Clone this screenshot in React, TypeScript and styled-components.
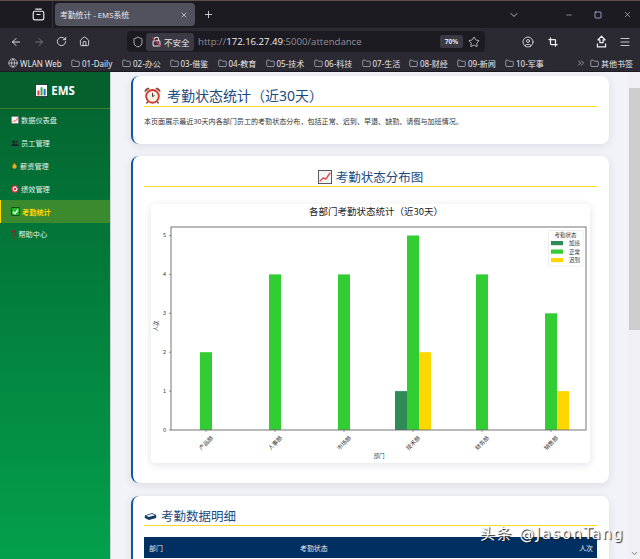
import styled, { createGlobalStyle } from "styled-components";
import {
  ArrowLeft, ArrowRight, RotateCw, Home, Shield, Star, CircleUser, Crop, Menu,
  Folder, Globe, ChevronDown, ChevronsRight, Minus, Square, X, Plus,
} from "lucide-react";

const Global = createGlobalStyle`
  html, body { margin: 0; padding: 0; height: 100%; overflow: hidden; }
  body { font-family: "Noto Sans", "Noto Sans CJK SC", sans-serif; background: #f2f3f8; }
  * { box-sizing: border-box; }
`;

const Screen = styled.div`
  position: relative;
  width: 640px;
  height: 559px;
  display: flex;
  flex-direction: column;
  overflow: hidden;
`;

/* browser chrome */
const TabStrip = styled.div`
  height: 28px;
  flex: none;
  display: flex;
  align-items: center;
  background: #1c1b22;
  border-top: 1px solid #5a5048;
  color: #e6e6ea;
`;

const TabsButton = styled.div`
  width: 53px;
  height: 100%;
  display: flex;
  align-items: center;
  justify-content: flex-end;
  padding-right: 7px;
  border-right: 1px solid #33323a;
`;

const Tab = styled.div`
  width: 140px;
  height: 23px;
  margin-left: 2px;
  padding: 0 7px 0 5px;
  display: flex;
  align-items: center;
  justify-content: space-between;
  background: #52525e;
  border-radius: 4px;
  font-size: 7.8px;
  color: #e8e8ec;
`;

const NewTab = styled.div`
  margin-left: 8px;
  display: flex;
`;

const WindowControls = styled.div`
  margin-left: auto;
  display: flex;
  align-items: center;
  padding-right: 8px;
`;

const WindowButton = styled.div<{ $mr: number }>`
  display: flex;
  margin-right: ${(p) => p.$mr}px;
`;

const Toolbar = styled.div`
  height: 27px;
  flex: none;
  display: flex;
  align-items: center;
  padding-left: 4px;
  background: #2b2a33;
  color: #e6e6ea;
`;

const ToolButton = styled.div<{ $dim?: boolean }>`
  width: 23px;
  height: 23px;
  display: flex;
  align-items: center;
  justify-content: center;
  color: ${(p) => (p.$dim ? "#7b7a82" : "#eeeef0")};
`;

const AddressBar = styled.div`
  width: 358px;
  height: 21px;
  margin-left: 31px;
  padding-left: 3px;
  display: flex;
  align-items: center;
  background: #1c1b22;
  border-radius: 4px;
`;

const ShieldSlot = styled.div`
  width: 16px;
  display: flex;
  justify-content: center;
  color: #dcdce0;
`;

const InsecurePill = styled.div`
  width: 48px;
  height: 18px;
  display: flex;
  align-items: center;
  gap: 2px;
  padding-left: 5px;
  background: #3a3944;
  border-radius: 3px;
  font-size: 8.5px;
  color: #e6e6ea;
`;

const Url = styled.div`
  margin-left: 4px;
  font-family: "Open Sans", sans-serif;
  font-size: 9.6px;
  color: #8f8f96;
  white-space: nowrap;
`;

const UrlHost = styled.span`
  color: #eeeef0;
`;

const Zoom = styled.div`
  margin-left: auto;
  width: 23px;
  height: 13px;
  display: flex;
  align-items: center;
  justify-content: center;
  background: #3a3944;
  border-radius: 2px;
  font-size: 6.5px;
  font-weight: 700;
  color: #e6e6ea;
`;

const AddressStar = styled.div`
  width: 22px;
  display: flex;
  justify-content: center;
  color: #e6e6ea;
`;

const ToolbarRight = styled.div`
  margin-left: 31px;
  display: flex;
  align-items: center;
`;

const Spacer = styled.div<{ $w: number }>`
  width: ${(p) => p.$w}px;
`;

const Bookmarks = styled.div`
  height: 17px;
  flex: none;
  display: flex;
  align-items: center;
  padding-left: 8px;
  background: #2b2a33;
  border-bottom: 1px solid #1c1b22;
  color: #e6e6ea;
`;

const Bookmark = styled.div<{ $w: number }>`
  width: ${(p) => p.$w}px;
  flex: none;
  display: flex;
  align-items: center;
  gap: 2px;
  font-size: 8px;
  white-space: nowrap;
`;

const OverflowMark = styled.div`
  margin-left: 19px;
  width: 17px;
  display: flex;
  color: #d8d8dc;
`;

/* page */
const Page = styled.div`
  flex: 1;
  min-height: 0;
  display: flex;
  background: #f2f3f8;
`;

const Sidebar = styled.nav`
  width: 111px;
  flex: none;
  background: linear-gradient(180deg, #04622f 0%, #027a3a 40%, #04a04c 100%);
  border-right: 1px solid #c9d6cd;
`;

const Brand = styled.div`
  height: 37px;
  display: flex;
  align-items: center;
  justify-content: center;
  gap: 3px;
  background: #05602e;
  border-bottom: 1px solid #3f7d2a;
  font-size: 11.5px;
  font-weight: 700;
  color: #fff;
`;

const NavItem = styled.div<{ $active?: boolean }>`
  height: 22.8px;
  display: flex;
  align-items: center;
  gap: 2px;
  padding-left: 10px;
  font-size: 7.2px;
  color: ${(p) => (p.$active ? "#ffd700" : "#e4f2e8")};
  font-weight: ${(p) => (p.$active ? 700 : 400)};
  background: ${(p) => (p.$active ? "#3b8a2e" : "transparent")};
  border-left: 1px solid ${(p) => (p.$active ? "#ffd700" : "transparent")};
`;

const Main = styled.main`
  flex: 1;
  min-width: 0;
  padding: 4px 19px 0 20px;
  display: flex;
  flex-direction: column;
  gap: 12px;
`;

const Card = styled.section<{ $h: number; $pt: number }>`
  height: ${(p) => p.$h}px;
  flex: none;
  padding: ${(p) => p.$pt}px 12px 0 11px;
  background: #fff;
  border-left: 2px solid #0f56a3;
  border-radius: 8px;
  box-shadow: 0 2px 8px rgba(20, 30, 60, 0.1);
`;

const DetailCard = styled(Card)`
  margin-top: 1px;
`;

const Title = styled.h2<{ $center?: boolean; $size: number; $h: number; $gap: number }>`
  margin: 0;
  height: ${(p) => p.$h}px;
  display: flex;
  align-items: center;
  justify-content: ${(p) => (p.$center ? "center" : "flex-start")};
  gap: ${(p) => p.$gap}px;
  font-size: ${(p) => p.$size}px;
  font-weight: 400;
  color: #1a4a80;
  border-bottom: 1px solid #ffd92e;
`;

const Intro = styled.p`
  margin: 9px 0 0;
  font-size: 7.07px;
  line-height: 10px;
  color: #333;
`;

const ChartCard = styled.div`
  margin: 17px 7px 0 7px;
  height: 259px;
  background: #fff;
  border-radius: 4px;
  box-shadow: 0 2px 8px rgba(20, 30, 60, 0.12);
`;

const ChartSvg = styled.svg`
  display: block;
  font-family: "Noto Sans CJK SC", sans-serif;
`;

const Table = styled.table`
  width: 453px;
  margin-top: 11px;
  border-collapse: collapse;
  table-layout: fixed;
`;

const HeadCell = styled.th<{ $right?: boolean }>`
  height: 21px;
  padding: 0 4px 0 5px;
  background: #002f62;
  font-size: 6.9px;
  font-weight: 400;
  color: #e6edf5;
  text-align: ${(p) => (p.$right ? "right" : "left")};
`;

const Watermark = styled.div`
  position: absolute;
  left: 480px;
  top: 524px;
  font-family: "DejaVu Sans", "Noto Sans CJK SC", sans-serif;
  font-size: 15px;
  line-height: 20px;
  color: #fff;
  white-space: nowrap;
  letter-spacing: 1.5px;
  text-shadow: 1px 1px 1px #222;
`;

const Track = styled.div`
  width: 12px;
  flex: none;
  padding-top: 16px;
  display: flex;
  flex-direction: column;
  background: #f0f0f4;
  position: relative;
`;

const Thumb = styled.div`
  height: 242px;
  margin-left: 1px;
  background: #cdcdcd;
`;

const ScrollDown = styled.div`
  position: absolute;
  right: 1px;
  bottom: 1px;
  display: flex;
  color: #555;
`;

/* icons drawn to match the emoji in the page */
const BarsIcon = ({ s }: { s: number }) => (
  <svg width={s} height={s} viewBox="0 0 16 16">
    <rect x="0.5" y="0.5" width="15" height="15" fill="#fff" stroke="#223" />
    <rect x="3" y="8" width="2.5" height="6" fill="#e23a3a" />
    <rect x="6.8" y="4" width="2.5" height="10" fill="#2fae4a" />
    <rect x="10.6" y="6" width="2.5" height="8" fill="#2a70d8" />
  </svg>
);

const TrendIcon = ({ s }: { s: number }) => (
  <svg width={s} height={s} viewBox="0 0 16 16">
    <rect x="0.5" y="0.5" width="15" height="15" fill="#f4f4f4" stroke="#444" />
    <path d="M2 13 L6 9 L9 10.5 L14 3" fill="none" stroke="#e04848" strokeWidth="1.6" />
  </svg>
);

const PeopleIcon = ({ s }: { s: number }) => (
  <svg width={s} height={s} viewBox="0 0 16 16">
    <circle cx="5" cy="6" r="2.8" fill="#1f242c" />
    <circle cx="11" cy="6" r="2.8" fill="#2a2f38" />
    <path d="M0 14 C1 8 15 8 16 14 Z" fill="#1f242c" />
  </svg>
);

const MoneyIcon = ({ s }: { s: number }) => (
  <svg width={s} height={s} viewBox="0 0 16 16">
    <path d="M5 1 H11 L9.5 4.5 H6.5 Z" fill="#8a5a10" />
    <path d="M8 4 C14 6 15 15.5 8 15.5 C1 15.5 2 6 8 4 Z" fill="#f0a818" />
  </svg>
);

const TargetIcon = ({ s }: { s: number }) => (
  <svg width={s} height={s} viewBox="0 0 16 16">
    <circle cx="8" cy="8" r="7.4" fill="#e0303a" />
    <circle cx="8" cy="8" r="4.8" fill="#fff" />
    <circle cx="8" cy="8" r="2.4" fill="#e0303a" />
    <path d="M8 8 L14 2" stroke="#3a70d0" strokeWidth="1.6" />
  </svg>
);

const CheckIcon = ({ s }: { s: number }) => (
  <svg width={s} height={s} viewBox="0 0 16 16">
    <rect x="0.75" y="0.75" width="14.5" height="14.5" rx="1.5" fill="#22b82e" stroke="#0c3a12" strokeWidth="1.5" />
    <path d="M3.5 8.5 L7 12 L12.5 4.5" fill="none" stroke="#fff" strokeWidth="2.4" />
  </svg>
);

const QuestionIcon = ({ s }: { s: number }) => (
  <svg width={s * 0.6} height={s} viewBox="0 0 10 16">
    <path d="M1.5 5 C1.5 0 9 0 9 4.6 C9 7.5 5.6 7.6 5.6 10.5" fill="none" stroke="#b31414" strokeWidth="2.6" />
    <circle cx="5.5" cy="14" r="1.7" fill="#b31414" />
  </svg>
);

const AlarmIcon = ({ s }: { s: number }) => (
  <svg width={s} height={s} viewBox="0 0 16 16">
    <path d="M0.8 4.5 C1 1.5 3.5 0.5 5 1.5 Z M15.2 4.5 C15 1.5 12.5 0.5 11 1.5 Z" fill="#c9342a" stroke="#40201c" strokeWidth="0.5" />
    <circle cx="8" cy="8.8" r="6" fill="#f7efe2" stroke="#d0392c" strokeWidth="1.7" />
    <path d="M8 5.5 V9 L10 8" fill="none" stroke="#333" strokeWidth="0.9" />
    <path d="M3.5 14 L2.3 15.5 M12.5 14 L13.7 15.5" stroke="#40201c" strokeWidth="1.2" />
  </svg>
);

const BooksIcon = ({ s }: { s: number }) => (
  <svg width={s} height={s} viewBox="0 0 16 16">
    <path d="M1 8 L10 5 L15 7.5 L15 11 L6 13.5 L1 11 Z" fill="#123a66" />
    <path d="M2.5 8.2 L10 5.9 L13.6 7.6 L6 9.9 Z" fill="#e4edf5" />
  </svg>
);

const TabsGlyph = () => (
  <svg width="13" height="13" viewBox="0 0 16 16" fill="none" stroke="currentColor" strokeWidth="1.5">
    <rect x="1.5" y="4" width="13" height="10.5" rx="2" />
    <path d="M4 1.5 H12 M5.5 8 H10.5" />
  </svg>
);

const LockOffGlyph = () => (
  <svg width="11" height="11" viewBox="0 0 16 16" fill="none" strokeWidth="1.5">
    <rect x="3" y="7" width="10" height="7.5" rx="1.5" stroke="#e6e6ea" />
    <path d="M5 7 V4.5 C5 1 11 1 11 4.5 V7" stroke="#e6e6ea" />
    <path d="M2 2 L14 15" stroke="#e8384f" />
  </svg>
);

const ShareGlyph = () => (
  <svg width="13" height="13" viewBox="0 0 16 16" fill="none" stroke="currentColor" strokeWidth="1.5">
    <path d="M8 1.5 L3.5 6 H6 V9.5 H10 V6 H12.5 Z" strokeLinejoin="round" />
    <path d="M3 10.5 V14.5 H13 V10.5" />
  </svg>
);

/* chart data, page pixels relative to the chart card */
const CARD_X = 151;
const CARD_Y = 204;
const colors = { ot: "#2e8b57", ok: "#32cd32", late: "#ffd700" };
const yFor = (v: number) => 430 - v * 38.9;
const bars = [
  { x: 200, v: 2, c: colors.ok },
  { x: 269, v: 4, c: colors.ok },
  { x: 338, v: 4, c: colors.ok },
  { x: 395, v: 1, c: colors.ot },
  { x: 407, v: 5, c: colors.ok },
  { x: 419, v: 2, c: colors.late },
  { x: 476, v: 4, c: colors.ok },
  { x: 545, v: 3, c: colors.ok },
  { x: 557, v: 1, c: colors.late },
];
const depts = [
  { name: "产品部", x: 206 },
  { name: "人事部", x: 275 },
  { name: "市场部", x: 344 },
  { name: "技术部", x: 413 },
  { name: "财务部", x: 482 },
  { name: "销售部", x: 551 },
];
const legend = [
  { name: "加班", c: colors.ot, y: 241 },
  { name: "正常", c: colors.ok, y: 249.5 },
  { name: "迟到", c: colors.late, y: 258 },
];

const AttendanceChart = () => (
  <ChartSvg width="439" height="259" viewBox={`${CARD_X} ${CARD_Y} 439 259`}>
    <text x="376" y="215" fontSize="9.5" textAnchor="middle" fill="#222">各部门考勤状态统计（近30天）</text>
    {bars.map((b) => (
      <rect key={b.x} x={b.x} y={yFor(b.v)} width="12" height={430 - yFor(b.v)} fill={b.c} />
    ))}
    <rect x="171" y="227" width="415" height="203" fill="none" stroke="#666" strokeWidth="0.9" />
    {[0, 1, 2, 3, 4, 5].map((v) => (
      <g key={v}>
        <line x1="169" x2="171" y1={yFor(v)} y2={yFor(v)} stroke="#555" strokeWidth="0.6" />
        <text x="166" y={yFor(v) + 1.8} fontSize="5.5" textAnchor="end" fill="#333">{v}</text>
      </g>
    ))}
    {depts.map((d) => (
      <g key={d.name}>
        <line x1={d.x} x2={d.x} y1="430" y2="432" stroke="#555" strokeWidth="0.6" />
        <text
          x={d.x}
          y="445"
          fontSize="5.7"
          textAnchor="middle"
          fill="#333"
          transform={`rotate(-45 ${d.x} 443)`}
        >
          {d.name}
        </text>
      </g>
    ))}
    <text x="379" y="458" fontSize="5.5" textAnchor="middle" fill="#333">部门</text>
    <text x="160" y="328" fontSize="5.5" textAnchor="middle" fill="#333" transform="rotate(-90 158 328)">人次</text>
    <rect x="548.5" y="230.5" width="34.5" height="35.5" rx="1" fill="#fff" stroke="#ddd" strokeWidth="0.5" />
    <text x="565.5" y="237" fontSize="5.5" textAnchor="middle" fill="#333">考勤状态</text>
    {legend.map((l) => (
      <g key={l.name}>
        <rect x="551" y={l.y} width="12" height="4.2" fill={l.c} />
        <text x="569" y={l.y + 4.2} fontSize="5.5" fill="#333">{l.name}</text>
      </g>
    ))}
  </ChartSvg>
);

const bookmarkList = [
  { name: "01-Daily", w: 51 },
  { name: "02-办公", w: 47.5 },
  { name: "03-借鉴", w: 48 },
  { name: "04-教育", w: 48 },
  { name: "05-技术", w: 48 },
  { name: "06-科技", w: 48 },
  { name: "07-生活", w: 47.5 },
  { name: "08-财经", w: 48 },
  { name: "09-新闻", w: 48 },
  { name: "10-军事", w: 52 },
];

const navItems = [
  { label: "数据仪表盘", icon: <TrendIcon s={8} /> },
  { label: "员工管理", icon: <PeopleIcon s={8} /> },
  { label: "薪资管理", icon: <MoneyIcon s={7} /> },
  { label: "绩效管理", icon: <TargetIcon s={8} /> },
  { label: "考勤统计", icon: <CheckIcon s={9} />, active: true },
  { label: "帮助中心", icon: <QuestionIcon s={9} /> },
];

export default function App() {
  return (
    <Screen>
      <Global />
      <TabStrip>
        <TabsButton><TabsGlyph /></TabsButton>
        <Tab>
          考勤统计 - EMS系统
          <X size={8} strokeWidth={2} />
        </Tab>
        <NewTab><Plus size={11} strokeWidth={1.8} /></NewTab>
        <WindowControls>
          <WindowButton $mr={45}><ChevronDown size={12} strokeWidth={1.5} /></WindowButton>
          <WindowButton $mr={21}><Minus size={8} strokeWidth={1.5} /></WindowButton>
          <WindowButton $mr={21}><Square size={8} strokeWidth={2.2} color="#c9c6ff" /></WindowButton>
          <WindowButton $mr={0}><X size={9} strokeWidth={1.5} /></WindowButton>
        </WindowControls>
      </TabStrip>
      <Toolbar>
        <ToolButton><ArrowLeft size={12} strokeWidth={1.8} /></ToolButton>
        <ToolButton $dim><ArrowRight size={12} strokeWidth={1.8} /></ToolButton>
        <ToolButton><RotateCw size={11} strokeWidth={1.8} /></ToolButton>
        <ToolButton><Home size={11} strokeWidth={1.8} /></ToolButton>
        <AddressBar>
          <ShieldSlot><Shield size={12} strokeWidth={1.5} /></ShieldSlot>
          <InsecurePill><LockOffGlyph />不安全</InsecurePill>
          <Url>http://<UrlHost>172.16.27.49</UrlHost>:5000/attendance</Url>
          <Zoom>70%</Zoom>
          <AddressStar><Star size={12} strokeWidth={1.5} /></AddressStar>
        </AddressBar>
        <ToolbarRight>
          <ToolButton><CircleUser size={12} strokeWidth={1.6} /></ToolButton>
          <Spacer $w={2} />
          <ToolButton><Crop size={10} strokeWidth={3} /></ToolButton>
          <Spacer $w={26} />
          <ToolButton><ShareGlyph /></ToolButton>
          <ToolButton><Menu size={12} strokeWidth={1.6} /></ToolButton>
        </ToolbarRight>
      </Toolbar>
      <Bookmarks>
        <Bookmark $w={63}><Globe size={10} strokeWidth={1.6} />WLAN Web</Bookmark>
        {bookmarkList.map((b) => (
          <Bookmark key={b.name} $w={b.w}><Folder size={9} strokeWidth={1.5} />{b.name}</Bookmark>
        ))}
        <OverflowMark><ChevronsRight size={10} strokeWidth={1.5} /></OverflowMark>
        <Bookmark $w={50}><Folder size={9} strokeWidth={1.5} />其他书签</Bookmark>
      </Bookmarks>
      <Page>
        <Sidebar>
          <Brand><BarsIcon s={13} />EMS</Brand>
          {navItems.map((n) => (
            <NavItem key={n.label} $active={n.active}>{n.icon}{n.label}</NavItem>
          ))}
        </Sidebar>
        <Main>
          <Card $h={68} $pt={8}>
            <Title $size={14} $h={23} $gap={6}><AlarmIcon s={17} />考勤状态统计（近30天）</Title>
            <Intro>本页面展示最近30天内各部门员工的考勤状态分布，包括正常、迟到、早退、缺勤、请假与加班情况。</Intro>
          </Card>
          <Card $h={327} $pt={11}>
            <Title $center $size={12.5} $h={20} $gap={4}><TrendIcon s={14} />考勤状态分布图</Title>
            <ChartCard><AttendanceChart /></ChartCard>
          </Card>
          <DetailCard $h={100} $pt={9}>
            <Title $size={12.5} $h={21} $gap={4}><BooksIcon s={13} />考勤数据明细</Title>
            <Table>
              <thead>
                <tr>
                  <HeadCell>部门</HeadCell>
                  <HeadCell>考勤状态</HeadCell>
                  <HeadCell $right>人次</HeadCell>
                </tr>
              </thead>
            </Table>
          </DetailCard>
        </Main>
        <Track>
          <Thumb />
          <ScrollDown><ChevronDown size={9} strokeWidth={2} /></ScrollDown>
        </Track>
      </Page>
      <Watermark>头条 @JasonTang</Watermark>
    </Screen>
  );
}
